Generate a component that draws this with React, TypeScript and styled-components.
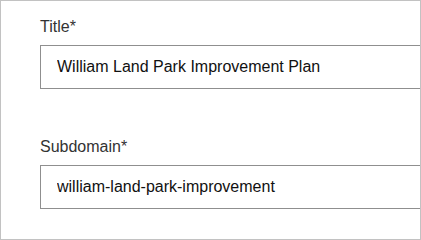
import React from 'react'
import styled, { createGlobalStyle } from 'styled-components'

const GlobalStyle = createGlobalStyle`
  html, body {
    margin: 0;
    padding: 0;
    background: #fff;
  }
  body {
    font-family: "Liberation Sans", Arial, sans-serif;
  }
`

export default function App() {
  return (
    <>
      <GlobalStyle />
      <Frame>
        <Form>
          <Field>
            <Label htmlFor="title">Title*</Label>
            <Input id="title" defaultValue="William Land Park Improvement Plan" />
          </Field>
          <Field>
            <Label htmlFor="subdomain">Subdomain*</Label>
            <Input id="subdomain" defaultValue="william-land-park-improvement" />
          </Field>
        </Form>
      </Frame>
    </>
  )
}

const Frame = styled.div`
    width: 421px;
    height: 240px;
    box-sizing: border-box;
    border: 1px solid #c2c2c2;
    overflow: hidden;
    background: #fff;
`

const Form = styled.div`
    width: 520px;
    padding: 16px 0 0 39px;
    display: flex;
    flex-direction: column;
    gap: 48px;
`

const Field = styled.div`
    display: flex;
    flex-direction: column;
    gap: 8px;
`

const Label = styled.label`
    font-size: 16px;
    line-height: 20px;
    color: #333333;
`

const Input = styled.input`
    box-sizing: border-box;
    width: 100%;
    height: 44px;
    margin: 0;
    padding: 0 16px;
    border: 1px solid #8f8f8f;
    border-radius: 0;
    font-family: "Liberation Sans", Arial, sans-serif;
    font-size: 16px;
    color: #111111;
    background: #fff;
    outline: none;
`
